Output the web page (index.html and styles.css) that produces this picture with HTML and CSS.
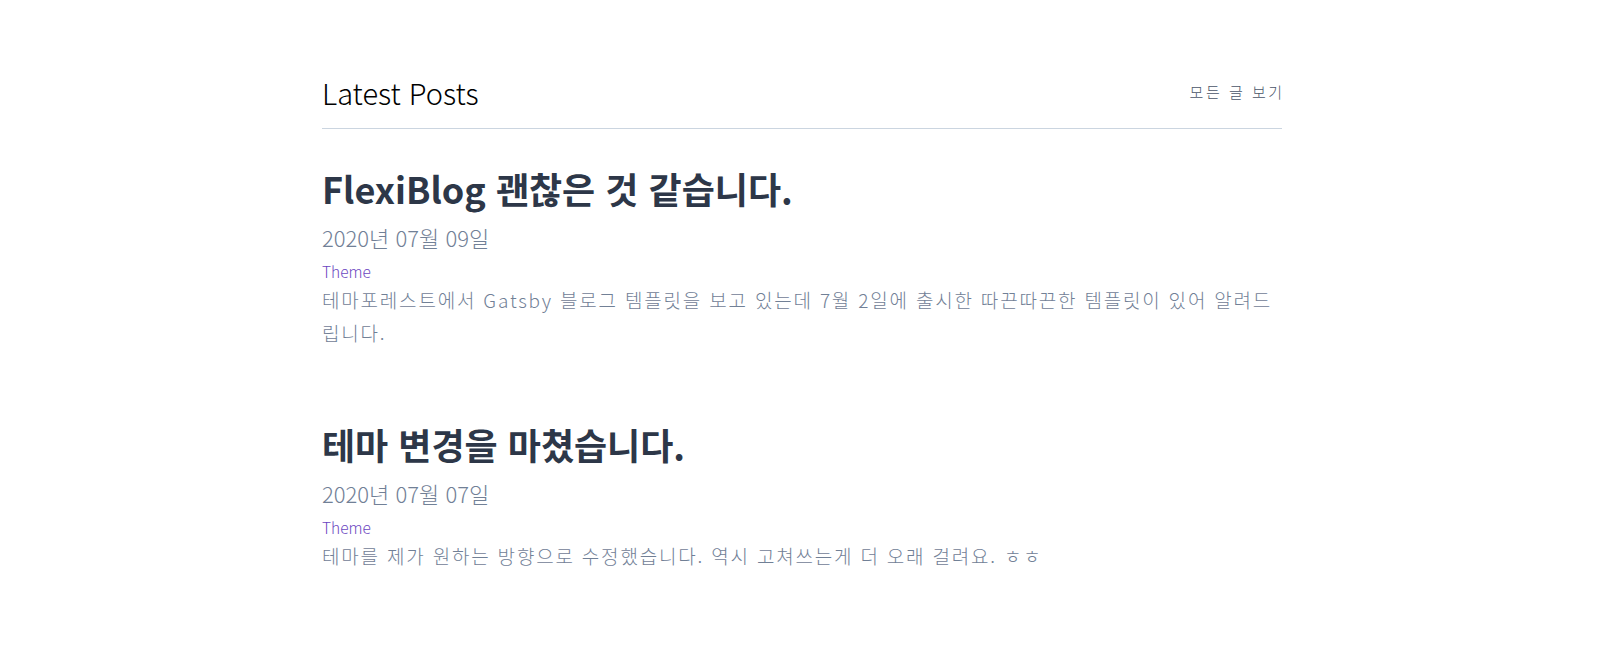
FILE: index.html
```html
<!DOCTYPE html>
<html lang="ko">
<head>
<meta charset="utf-8">
<title>Latest Posts</title>
<link rel="stylesheet" href="styles.css">
</head>
<body>
<main class="container">
  <header class="section-head">
    <h2 class="section-title">Latest Posts</h2>
    <a class="view-all" href="#">모든 글 보기</a>
  </header>
  <article class="post">
    <h1 class="post-title">FlexiBlog 괜찮은 것 같습니다.</h1>
    <div class="post-date">2020년 07월 09일</div>
    <a class="post-tag" href="#">Theme</a>
    <p class="post-excerpt">테마포레스트에서 Gatsby 블로그 템플릿을 보고 있는데 7월 2일에 출시한 따끈따끈한 템플릿이 있어 알려드립니다.</p>
  </article>
  <article class="post">
    <h1 class="post-title">테마 변경을 마쳤습니다.</h1>
    <div class="post-date">2020년 07월 07일</div>
    <a class="post-tag" href="#">Theme</a>
    <p class="post-excerpt">테마를 제가 원하는 방향으로 수정했습니다. 역시 고쳐쓰는게 더 오래 걸려요. ㅎㅎ</p>
  </article>
</main>
</body>
</html>
```

FILE: styles.css
```css
html, body {
  margin: 0;
  padding: 0;
  background: #ffffff;
}
body {
  font-family: "Noto Sans CJK KR", "Noto Sans", sans-serif;
}
.container {
  width: 960px;
  margin-left: calc(50% - 478px);
  padding-top: 72px;
}
.section-head {
  display: flex;
  justify-content: space-between;
  align-items: center;
  border-bottom: 1px solid #cbd5e0;
  padding-bottom: 16px;
}
.section-title {
  margin: 0;
  font-size: 29px;
  font-weight: 300;
  color: #000000;
  line-height: 40px;
}
.view-all {
  font-size: 15px;
  font-weight: 300;
  color: #4a5568;
  text-decoration: none;
  letter-spacing: 2.5px;
  word-spacing: 0;
  margin-right: -2.5px;
  line-height: 40px;
}
.post {
  padding-top: 34px;
  padding-bottom: 36px;
}
.post-title {
  margin: 0 0 7px;
  font-size: 36px;
  font-weight: 700;
  color: #2d3748;
  line-height: 50px;
}
.post-date {
  font-size: 22px;
  color: #718096;
  line-height: 34px;
  font-weight: 300;
}
.post-tag {
  display: block;
  margin-top: 5px;
  font-size: 15.5px;
  font-weight: 300;
  color: #6b46c1;
  text-decoration: none;
  line-height: 24px;
}
.post-excerpt {
  margin: 0;
  font-size: 19px;
  color: #718096;
  line-height: 33px;
  font-weight: 300;
  letter-spacing: 1.8px;
}
```
